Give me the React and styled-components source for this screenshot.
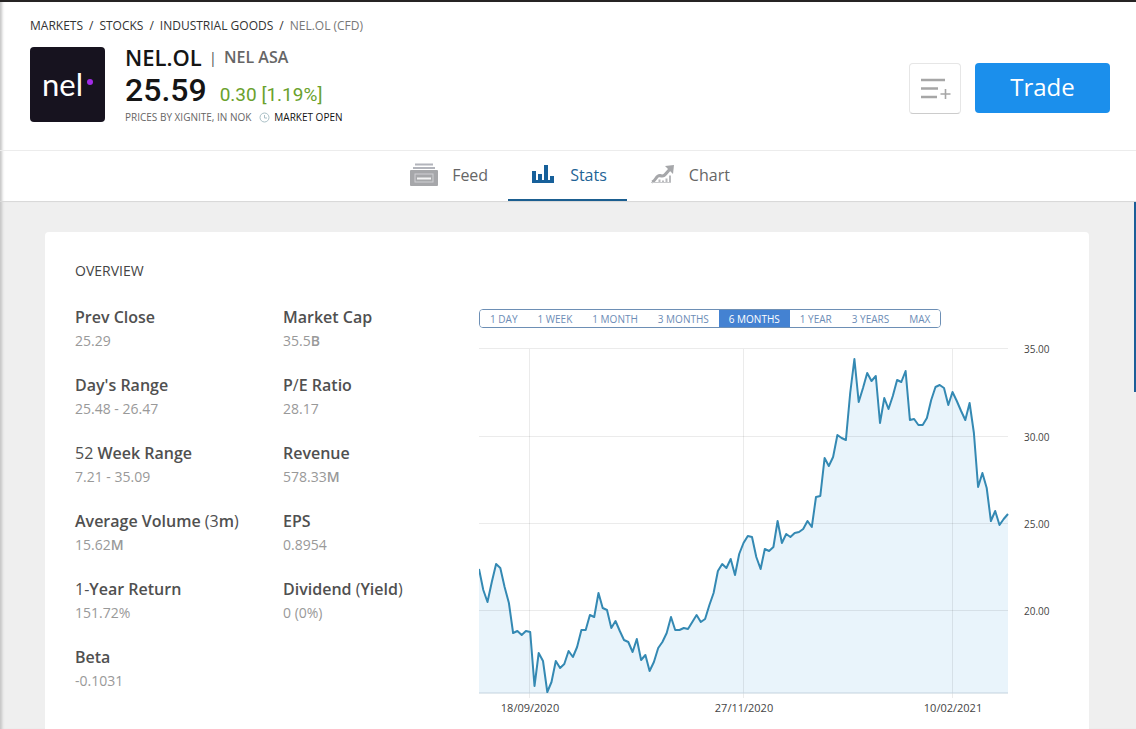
import React, { useState } from "react";
import styled, { createGlobalStyle } from "styled-components";

const crumbs = ["MARKETS", "STOCKS", "INDUSTRIAL GOODS"];

const stats = [
  ["Prev Close", "25.29"],
  ["Day's Range", "25.48 - 26.47"],
  ["52 Week Range", "7.21 - 35.09"],
  ["Average Volume (3m)", "15.62M"],
  ["1-Year Return", "151.72%"],
  ["Beta", "-0.1031"],
  ["Market Cap", "35.5B"],
  ["P/E Ratio", "28.17"],
  ["Revenue", "578.33M"],
  ["EPS", "0.8954"],
  ["Dividend (Yield)", "0 (0%)"],
];

const ranges = [
  "1 DAY",
  "1 WEEK",
  "1 MONTH",
  "3 MONTHS",
  "6 MONTHS",
  "1 YEAR",
  "3 YEARS",
  "MAX",
];

// depth of each daily close below the 35.00 grid line
const closes = [
  220, 241, 253, 233, 215, 219, 238, 254, 284, 282, 286, 282, 283, 337, 304,
  312, 343, 333, 312, 319, 315, 302, 308, 298, 281, 281, 266, 268, 244, 259,
  261, 279, 272, 282, 291, 293, 303, 290, 311, 306, 322, 313, 299, 293, 284,
  268, 281, 281, 279, 280, 273, 266, 273, 270, 256, 244, 222, 215, 219, 210,
  226, 205, 194, 187, 188, 208, 220, 200, 202, 198, 172, 194, 185, 188, 184,
  183, 180, 172, 178, 148, 147, 109, 117, 108, 86, 89, 91, 44, 10, 53, 39, 24,
  32, 27, 74, 49, 60, 47, 31, 33, 22, 71, 70, 76, 76, 69, 51, 38, 36, 39, 56,
  43, 52, 62, 71, 54, 84, 138, 124, 139, 172, 162, 176, 170, 165,
];

const plotWidth = 529;
const plotHeight = 344;

const yTicks = [
  [0, "35.00"],
  [88, "30.00"],
  [175, "25.00"],
  [262, "20.00"],
];

const xTicks = [
  [51, "18/09/2020"],
  [265, "27/11/2020"],
  [474, "10/02/2021"],
];

function FeedIcon() {
  return (
    <svg width="28" height="24" viewBox="0 0 28 24" aria-hidden="true">
      <path d="M5 1.5h18M3 5h22" stroke="#b2b4bb" strokeWidth="2" />
      <rect y="7" width="28" height="16" rx="1" fill="#a6a7aa" />
      <rect x="5" y="11" width="18" height="8" fill="none" stroke="#cfd0d3" />
      <path d="M7 15.5h14" stroke="#f4f4f5" strokeWidth="2" />
    </svg>
  );
}

function StatsIcon() {
  return (
    <svg width="28" height="24" viewBox="0 0 28 24" aria-hidden="true">
      <path
        d="M4 8h4v9h2V11h4v6h2V2h4v15h2v-4h4v7H4z"
        fill="#17609a"
      />
    </svg>
  );
}

function ChartIcon() {
  return (
    <svg width="28" height="24" viewBox="0 0 28 24" aria-hidden="true">
      <path
        d="M5 19C9 18 9 12 13 12.500C17 14 18 12 23 6"
        fill="none"
        stroke="#a6a7aa"
        strokeWidth="3"
      />
      <path d="M18 3l9-1-1 9z" fill="#a6a7aa" />
      <path
        d="M12.500 19.500v-3M16 19.500v-2M19.500 19.500v-4M23 19.500v-7"
        stroke="#b9babd"
        strokeWidth="2"
      />
      <path d="M4 19.500h20" stroke="#c9cacc" />
    </svg>
  );
}

const tabs = [
  ["Feed", FeedIcon],
  ["Stats", StatsIcon],
  ["Chart", ChartIcon],
];

// digits and marks are drawn lighter than the words next to them
function Mixed({ text }) {
  return text
    .split(/([A-Za-z' ]+)/)
    .filter(Boolean)
    .map((part, i) =>
      /[A-Za-z]/.test(part) ? <b key={i}>{part}</b> : part
    );
}

function PriceChart() {
  const step = plotWidth / (closes.length - 1);
  const line = closes
    .map((y, i) => `${i ? "L" : "M"}${(i * step).toFixed(1)} ${y}`)
    .join("");
  return (
    <ChartSvg viewBox="0 -8 580 378" role="img" aria-label="NEL.OL price">
      <path
        d={`${line}L${plotWidth} ${plotHeight}L0 ${plotHeight}Z`}
        fill="#e9f4fb"
      />
      <g stroke="#000" strokeOpacity="0.08">
        {yTicks.map(([y]) => (
          <path key={y} d={`M0 ${y - 0.5}H${plotWidth}`} />
        ))}
        {xTicks.map(([x]) => (
          <path key={x} d={`M${x - 0.5} 0V${plotHeight + 5}`} />
        ))}
      </g>
      <path d={`M0 ${plotHeight}H${plotWidth}`} stroke="#c3d3de" />
      <path
        d={line}
        fill="none"
        stroke="#3489b3"
        strokeWidth="2"
        strokeLinejoin="round"
      />
      {yTicks.map(([y, label]) => (
        <AxisText key={label} x="545" y={y + 4}>
          {label}
        </AxisText>
      ))}
      {xTicks.map(([x, label]) => (
        <AxisText key={label} x={x} y="363" $date>
          {label}
        </AxisText>
      ))}
    </ChartSvg>
  );
}

function App() {
  const [tab, setTab] = useState("Stats");
  const [range, setRange] = useState("6 MONTHS");
  return (
    <>
      <GlobalStyle />
      <Page>
        <Header>
          <Crumbs aria-label="Breadcrumb">
            {crumbs.map((c) => (
              <React.Fragment key={c}>
                <a href="#">{c}</a>
                <span>/</span>
              </React.Fragment>
            ))}
            <em>NEL.OL (CFD)</em>
          </Crumbs>
          <Instrument>
            <Logo>
              nel
              <LogoDot />
            </Logo>
            <Quote>
              <NameRow>
                <h1>NEL.OL</h1>
                <i>|</i>
                <h2>NEL ASA</h2>
              </NameRow>
              <PriceRow>
                <strong>25.59</strong>
                <span>0.30 [1.19%]</span>
              </PriceRow>
              <MarketRow>
                PRICES BY XIGNITE, IN NOK
                <svg width="11" height="11" viewBox="0 0 11 11">
                  <circle
                    cx="5.5"
                    cy="5.5"
                    r="4.5"
                    fill="none"
                    stroke="#a9bfc6"
                  />
                  <path d="M5.5 3v3H8" fill="none" stroke="#a9bfc6" />
                </svg>
                <b>MARKET OPEN</b>
              </MarketRow>
            </Quote>
            <Actions>
              <ListButton aria-label="Add to watchlist">
                <svg width="32" height="22" viewBox="0 0 32 22">
                  <path
                    d="M2 2h24M2 10.500h17M2 19h16"
                    stroke="#a6a6a6"
                    strokeWidth="2.6"
                  />
                  <path
                    d="M26.500 11v10M21.500 16h10"
                    stroke="#a6a6a6"
                    strokeWidth="1.6"
                  />
                </svg>
              </ListButton>
              <TradeButton>Trade</TradeButton>
            </Actions>
          </Instrument>
        </Header>
        <Tabs>
          {tabs.map(([name, Icon]) => (
            <Tab
              key={name}
              $active={tab === name}
              onClick={() => setTab(name)}
            >
              <Icon />
              {name}
            </Tab>
          ))}
        </Tabs>
        <Main>
          <Card>
            <CardTitle>OVERVIEW</CardTitle>
            <Columns>
              <StatList>
                {stats.map(([label, value]) => (
                  <Stat key={label}>
                    <dt>
                      <Mixed text={label} />
                    </dt>
                    <dd>
                      <Mixed text={value} />
                    </dd>
                  </Stat>
                ))}
              </StatList>
              <div>
                <Ranges>
                  {ranges.map((r) => (
                    <RangeButton
                      key={r}
                      $active={range === r}
                      onClick={() => setRange(r)}
                    >
                      {r}
                    </RangeButton>
                  ))}
                </Ranges>
                <PriceChart />
              </div>
            </Columns>
          </Card>
          <ScrollThumb />
        </Main>
      </Page>
    </>
  );
}

export default App;

const GlobalStyle = createGlobalStyle`
  * {
    box-sizing: border-box;
  }
  body {
    margin: 0;
    background: #fff;
    color: #555;
    font-family: "Open Sans", "Noto Sans", sans-serif;
  }
  h1, h2, h3, dl, dd {
    margin: 0;
  }
  button {
    font-family: inherit;
    cursor: pointer;
  }
`;

const Page = styled.div`
  display: flex;
  flex-direction: column;
  height: 100vh;
  border-top: 2px solid #262424;
  box-shadow: inset 4px 0 3px -2px #c4c4c4;
`;

const Header = styled.header`
  padding: 14px 26px 27px 30px;
  border-bottom: 1px solid #ececec;
`;

const Crumbs = styled.nav`
  display: flex;
  gap: 6px;
  font-size: 12px;
  line-height: 20px;
  color: #333;
  a {
    color: inherit;
    text-decoration: none;
  }
  em {
    font-style: normal;
    color: #777;
  }
`;

const Instrument = styled.div`
  display: flex;
  gap: 20px;
  padding-top: 11px;
`;

const Logo = styled.div`
  display: flex;
  align-items: center;
  justify-content: center;
  gap: 4px;
  width: 75px;
  height: 75px;
  padding-bottom: 2px;
  border-radius: 4px;
  background: #17131f;
  color: #fff;
  font-family: Lato, sans-serif;
  font-size: 31px;
`;

const LogoDot = styled.span`
  width: 6px;
  height: 6px;
  margin-bottom: 4px;
  border-radius: 50%;
  background: #a32be8;
`;

const Quote = styled.div`
  flex: 1;
`;

const NameRow = styled.div`
  display: flex;
  align-items: center;
  gap: 7px;
  line-height: 21px;
  i {
    font-style: normal;
    font-size: 15px;
    color: #555;
  }
  h1 {
    font-size: 22px;
    font-weight: 600;
    color: #151515;
  }
  h2 {
    font-size: 16px;
    font-weight: 600;
    color: #666;
  }
`;

const PriceRow = styled.div`
  display: flex;
  align-items: baseline;
  gap: 13px;
  padding: 7px 0 1px;
  font-family: Roboto, sans-serif;
  line-height: 30px;
  strong {
    font-size: 32px;
    font-weight: 500;
    color: #151515;
  }
  span {
    font-size: 19px;
    color: #6aa12c;
  }
`;

const MarketRow = styled.div`
  display: flex;
  align-items: center;
  gap: 4px;
  font-size: 10px;
  line-height: 12px;
  color: #666;
  svg {
    margin-left: 4px;
  }
  b {
    font-weight: 400;
    color: #111;
  }
`;

const Actions = styled.div`
  display: flex;
  align-items: flex-start;
  gap: 14px;
  padding-top: 16px;
`;

const ListButton = styled.button`
  display: grid;
  place-items: center;
  width: 52px;
  height: 51px;
  padding: 0;
  border: 1px solid #e6e6e6;
  border-bottom-color: #ccc;
  border-radius: 4px;
  background: #fff;
`;

const TradeButton = styled.button`
  width: 135px;
  height: 50px;
  padding: 0 0 3px;
  border: 0;
  border-radius: 4px;
  background: #1b8fec;
  color: #fff;
  font-size: 24px;
`;

const Tabs = styled.nav`
  display: flex;
  justify-content: center;
  padding-left: 4px;
  border-bottom: 1px solid #d9d9d9;
`;

const Tab = styled.button`
  display: flex;
  align-items: center;
  gap: 14px;
  height: 50px;
  padding: 0 20px;
  border: 0;
  border-bottom: 2px solid ${(p) => (p.$active ? "#1b5e90" : "transparent")};
  background: none;
  font-size: 16px;
  color: ${(p) => (p.$active ? "#1f6496" : "#666")};
`;

const Main = styled.main`
  position: relative;
  flex: 1;
  min-height: 0;
  overflow: hidden;
  padding: 30px 47px 0 45px;
  background: #efefef;
  box-shadow: inset 4px 0 3px -2px #c4c4c4;
`;

const Card = styled.section`
  min-height: 100%;
  padding: 28px 30px;
  border-radius: 4px;
  background: #fff;
`;

const CardTitle = styled.h3`
  font-size: 14px;
  line-height: 22px;
  font-weight: 400;
  color: #444;
`;

const Columns = styled.div`
  display: grid;
  grid-template-columns: 404px 1fr;
  padding-top: 23px;
`;

const StatList = styled.dl`
  display: grid;
  grid-template-rows: repeat(6, auto);
  grid-auto-flow: column;
  grid-auto-columns: 208px;
  align-content: start;
  row-gap: 20px;
`;

const Stat = styled.div`
  line-height: 24px;
  dt {
    font-size: 16px;
    color: #505050;
  }
  dd {
    font-size: 14px;
    color: #999;
  }
  b {
    font-weight: 600;
  }
`;

const Ranges = styled.div`
  display: flex;
  width: fit-content;
  margin: 4px 0 13px;
  border: 1px solid #6d8fb5;
  border-radius: 4px;
  overflow: hidden;
`;

const RangeButton = styled.button`
  height: 17px;
  padding: 0 10px;
  border: 0;
  background: ${(p) => (p.$active ? "#4482d2" : "#fff")};
  color: ${(p) => (p.$active ? "#fff" : "#6c8cb6")};
  font-size: 10px;
  line-height: 16px;
`;

const ChartSvg = styled.svg`
  display: block;
  width: 100%;
`;

const AxisText = styled.text`
  font-size: ${(p) => (p.$date ? "11px" : "10px")};
  text-anchor: ${(p) => (p.$date ? "middle" : "start")};
  fill: #444;
`;

const ScrollThumb = styled.div`
  position: absolute;
  top: 0;
  right: 0;
  width: 2px;
  height: 36%;
  background: #1b5e98;
`;
